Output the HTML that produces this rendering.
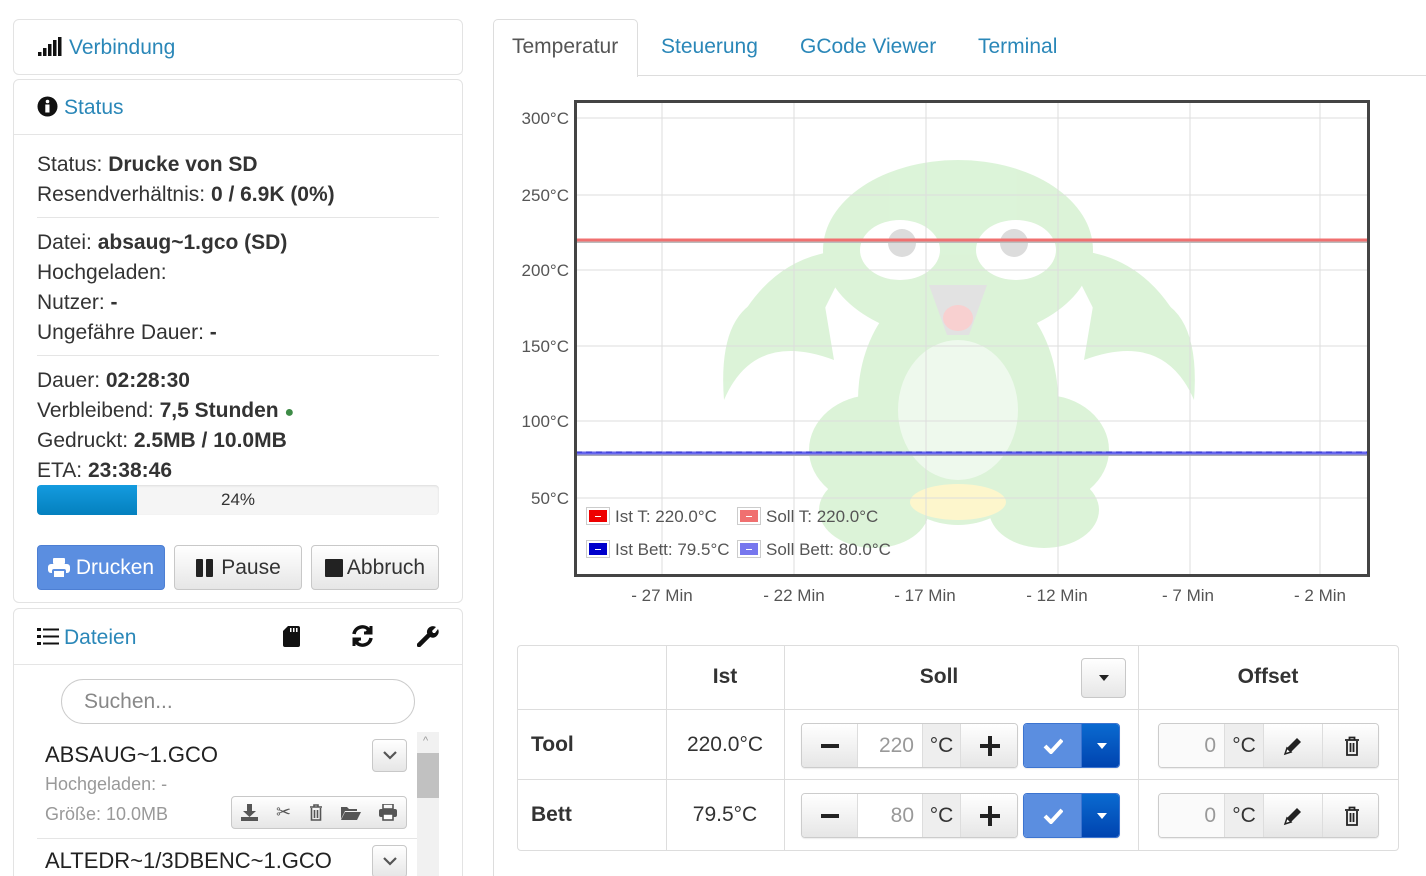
<!DOCTYPE html>
<html style="width:1426px;height:876px;overflow:hidden"><head><meta charset="utf-8"><style>
*{box-sizing:border-box;margin:0;padding:0}
body{width:1426px;height:876px;overflow:hidden;background:#fff;font-family:"Liberation Sans",sans-serif;color:#333;position:relative;font-size:21px}
.a{position:absolute}
.panel{position:absolute;border:1px solid #e3e3e3;border-radius:6px;background:#fff}
.link{color:#2a87b8}
.hr{position:absolute;height:1px;background:#e5e5e5}
.line{position:absolute;left:37px;font-size:21px;line-height:30px;white-space:nowrap}
b{font-weight:bold}
.btn{position:absolute;border:1px solid #c8c8c8;border-radius:4px;background:linear-gradient(#fff,#e6e6e6);display:flex;align-items:center;justify-content:center;color:#333}
.yl{position:absolute;left:505px;width:64px;text-align:right;font-size:17px;color:#555}
.xl{position:absolute;top:586px;font-size:17px;color:#555;width:100px;text-align:center}
.leg{position:absolute;font-size:17px;color:#555;white-space:nowrap}
.sw{display:inline-block;width:24px;height:18px;border:1px solid #ccc;padding:2px;vertical-align:-3px;margin-right:5px}
.sw i{display:block;width:100%;height:100%;position:relative}
.sw i:after{content:"";position:absolute;left:6px;right:6px;top:6px;height:1px;background:#fff}
.grp{position:absolute;height:45px;border:1px solid #ccc;border-radius:4px;overflow:hidden;box-shadow:0 1px 1px rgba(0,0,0,.08)}
.grp>div{position:absolute;top:0;height:43px;display:flex;align-items:center;justify-content:center;border-right:1px solid #ddd}
.g{background:linear-gradient(#fff,#e6e6e6)}
.ad{background:#eee}
.inp{background:#fff;justify-content:flex-end!important;padding-right:8px;color:#999}
</style></head><body>

<div class="panel" style="left:13px;top:19px;width:450px;height:56px"></div>
<svg class="a" style="left:38px;top:37px" width="24" height="20"><rect x="0" y="15" width="3.5" height="4" fill="#111"/><rect x="5" y="11" width="3.5" height="8" fill="#111"/><rect x="10" y="7" width="3.5" height="12" fill="#111"/><rect x="15" y="3" width="3.5" height="16" fill="#111"/><rect x="20" y="0" width="3.5" height="19" fill="#111"/></svg>
<div class="a link" style="left:69px;top:36px">Verbindung</div>

<div class="panel" style="left:13px;top:79px;width:450px;height:524px"></div>
<div class="hr" style="left:14px;top:134px;width:448px"></div>
<svg class="a" style="left:37px;top:96px" width="21" height="21"><circle cx="10.5" cy="10.5" r="10" fill="#111"/><circle cx="10.5" cy="5.5" r="1.8" fill="#fff"/><rect x="8.3" y="8.5" width="4.2" height="8" fill="#fff"/></svg>
<div class="a link" style="left:64px;top:96px">Status</div>
<div class="line" style="top:150px">Status: <b>Drucke von SD</b></div>
<div class="line" style="top:180px">Resendverhältnis: <b>0 / 6.9K (0%)</b></div>
<div class="hr" style="left:37px;top:217px;width:402px"></div>
<div class="line" style="top:228px">Datei: <b>absaug~1.gco (SD)</b></div>
<div class="line" style="top:258px">Hochgeladen:</div>
<div class="line" style="top:288px">Nutzer: <b>-</b></div>
<div class="line" style="top:318px">Ungefähre Dauer: <b>-</b></div>
<div class="hr" style="left:37px;top:355px;width:402px"></div>
<div class="line" style="top:366px">Dauer: <b>02:28:30</b></div>
<div class="line" style="top:396px">Verbleibend: <b>7,5 Stunden</b> <span style="color:#3d8b46;font-size:16px">●</span></div>
<div class="line" style="top:426px">Gedruckt: <b>2.5MB / 10.0MB</b></div>
<div class="line" style="top:456px">ETA: <b>23:38:46</b></div>
<div class="a" style="left:37px;top:485px;width:402px;height:30px;background:#f5f5f5;border-radius:4px;box-shadow:inset 0 1px 2px rgba(0,0,0,.1)"></div>
<div class="a" style="left:37px;top:485px;width:100px;height:30px;background:linear-gradient(#149bdf,#0480be);border-radius:4px 0 0 4px"></div>
<div class="a" style="left:37px;top:490px;width:402px;text-align:center;font-size:17px">24%</div>

<div class="btn" style="left:37px;top:545px;width:128px;height:45px;background:#5b8ee0;border-color:#4d7fd3;color:#fff;font-size:21px">
<svg width="22" height="20" style="margin-right:6px"><rect x="5" y="0" width="12" height="6" rx="1" fill="#fff"/><rect x="0" y="6" width="22" height="9" rx="3" fill="#fff"/><rect x="5" y="12" width="12" height="8" rx="1" fill="#fff" stroke="#5b8ee0" stroke-width="2"/></svg>Drucken</div>
<div class="btn" style="left:174px;top:545px;width:128px;height:45px;font-size:21px"><svg width="20" height="20" style="margin-right:6px"><rect x="1" y="1" width="7" height="18" rx="1" fill="#222"/><rect x="11" y="1" width="7" height="18" rx="1" fill="#222"/></svg>Pause</div>
<div class="btn" style="left:311px;top:545px;width:128px;height:45px;font-size:21px"><svg width="18" height="18" style="margin-right:4px"><rect x="0" y="0" width="18" height="18" rx="1" fill="#222"/></svg>Abbruch</div>

<div class="panel" style="left:13px;top:608px;width:450px;height:290px"></div>
<div class="hr" style="left:14px;top:664px;width:448px"></div>
<svg class="a" style="left:37px;top:628px" width="22" height="17"><rect x="0" y="0" width="4" height="3" fill="#111"/><rect x="6" y="0.5" width="16" height="2" fill="#111"/><rect x="0" y="7" width="4" height="3" fill="#111"/><rect x="6" y="7.5" width="16" height="2" fill="#111"/><rect x="0" y="14" width="4" height="3" fill="#111"/><rect x="6" y="14.5" width="16" height="2" fill="#111"/></svg>
<div class="a link" style="left:64px;top:626px">Dateien</div>
<svg class="a" style="left:283px;top:626px" width="17" height="21"><path d="M5 0H15Q17 0 17 2V19Q17 21 15 21H2Q0 21 0 19V5Z" fill="#111"/><rect x="7" y="2" width="1.5" height="4" fill="#fff"/><rect x="10" y="2" width="1.5" height="4" fill="#fff"/><rect x="13" y="2" width="1.5" height="4" fill="#fff"/></svg>
<svg class="a" style="left:351px;top:625px" width="23" height="22" fill="none" stroke="#111" stroke-width="3.5"><path d="M3 9A8.5 8.5 0 0 1 18 5"/><path d="M20 13A8.5 8.5 0 0 1 5 17"/><path d="M20 1V8H13" stroke-width="3" fill="#111"/><path d="M3 21V14H10" stroke-width="3" fill="#111"/></svg>
<svg class="a" style="left:417px;top:625px" width="22" height="22"><path d="M2 20L12 10" stroke="#111" stroke-width="4.5" stroke-linecap="round"/><path d="M10 8A6 6 0 0 1 19 2L15 6L16 8L18 8L21 4A6 6 0 0 1 13 12Z" fill="#111"/></svg>
<div class="a" style="left:61px;top:679px;width:354px;height:45px;border:1px solid #ccc;border-radius:23px;padding-left:22px;line-height:43px;color:#888;font-size:21px">Suchen...</div>
<div class="a" style="left:417px;top:732px;width:22px;height:144px;background:#f1f1f1"></div>
<div class="a" style="left:417px;top:753px;width:22px;height:45px;background:#c1c1c1"></div>
<div class="a" style="left:423px;top:735px;font-size:11px;color:#999">^</div>
<div class="a" style="left:45px;top:742px;font-size:22px;color:#222">ABSAUG~1.GCO</div>
<div class="btn" style="left:372px;top:739px;width:35px;height:33px"><svg width="14" height="9" fill="none" stroke="#555" stroke-width="2.2"><path d="M1 1L7 7L13 1"/></svg></div>
<div class="a" style="left:45px;top:774px;font-size:18px;color:#999">Hochgeladen: -</div>
<div class="a" style="left:45px;top:804px;font-size:18px;color:#999">Größe: 10.0MB</div>
<div class="btn" style="left:231px;top:796px;width:176px;height:33px;justify-content:space-around;color:#555;font-size:15px">
<svg width="17" height="17"><path d="M6 0H11V7H15L8.5 13L2 7H6Z" fill="#555"/><rect x="0" y="13" width="17" height="4" fill="#555"/></svg>
<span style="font-size:18px">✂</span>
<svg width="14" height="17" fill="none" stroke="#555" stroke-width="1.6"><path d="M1 3H13M5 3V1H9V3M2.5 4V16H11.5V4M5.5 6V14M8.5 6V14"/></svg>
<svg width="20" height="15"><path d="M0 2H6L8 4H16V6H4L0 14Z" fill="#555"/><path d="M4 7H20L16 15H0Z" fill="#555"/></svg>
<svg width="18" height="17"><rect x="4" y="0" width="10" height="5" fill="none" stroke="#555" stroke-width="1.6"/><rect x="0" y="5" width="18" height="8" rx="2" fill="#555"/><rect x="4" y="10" width="10" height="6" fill="#fff" stroke="#555" stroke-width="1.6"/></svg>
</div>
<div class="hr" style="left:37px;top:838px;width:380px"></div>
<div class="a" style="left:45px;top:848px;font-size:22px;color:#222">ALTEDR~1/3DBENC~1.GCO</div>
<div class="btn" style="left:372px;top:845px;width:35px;height:33px"><svg width="14" height="9" fill="none" stroke="#555" stroke-width="2.2"><path d="M1 1L7 7L13 1"/></svg></div>

<div class="a" style="left:493px;top:75px;width:940px;height:810px;border:1px solid #ddd"></div>
<div class="a" style="left:493px;top:19px;width:145px;height:58px;border:1px solid #ddd;border-bottom:none;border-radius:5px 5px 0 0;background:#fff"></div>
<div class="a" style="left:512px;top:35px;color:#555">Temperatur</div>
<div class="a link" style="left:661px;top:35px">Steuerung</div>
<div class="a link" style="left:800px;top:35px">GCode Viewer</div>
<div class="a link" style="left:978px;top:35px">Terminal</div>

<svg class="a" style="left:574px;top:100px" width="796" height="477">
<g fill="#d6f2d2" opacity="0.85">
<ellipse cx="384" cy="150" rx="135" ry="90"/>
<ellipse cx="384" cy="300" rx="100" ry="125"/>
<path d="M280 150Q200 150 160 230Q180 180 250 210Z"/>
<path d="M490 150Q570 150 610 230Q590 180 520 210Z"/>
<path d="M250 200Q140 170 150 300Q180 230 260 260Z"/>
<path d="M520 200Q630 170 620 300Q590 230 510 260Z"/>
<ellipse cx="300" cy="350" rx="65" ry="55"/>
<ellipse cx="470" cy="350" rx="65" ry="55"/>
<ellipse cx="300" cy="410" rx="55" ry="38"/>
<ellipse cx="470" cy="410" rx="55" ry="38"/>
</g>
<ellipse cx="384" cy="310" rx="60" ry="70" fill="#eef9ed"/>
<ellipse cx="326" cy="150" rx="40" ry="30" fill="#fff"/>
<ellipse cx="442" cy="150" rx="40" ry="30" fill="#fff"/>
<circle cx="328" cy="143" r="14" fill="#dcdcdc"/>
<circle cx="440" cy="143" r="14" fill="#dcdcdc"/>
<path d="M355 185H413L395 235H373Z" fill="#e2e2e2"/>
<ellipse cx="384" cy="218" rx="15" ry="13" fill="#f8d0d0"/>
<ellipse cx="384" cy="402" rx="48" ry="18" fill="#fdf6cc"/>
<g stroke="#ddd" stroke-width="1">
<path d="M88 0V477M220 0V477M352 0V477M484 0V477M616 0V477M746 0V477"/>
<path d="M0 18H796M0 95H796M0 170H796M0 246H796M0 321H796M0 398H796"/>
</g>
<path d="M2 142H794" stroke="#bbb" stroke-width="2"/>
<path d="M2 140H794" stroke="#f07070" stroke-width="3"/>
<path d="M2 355H794" stroke="#aab" stroke-width="2"/>
<path d="M2 353H794" stroke="#6666ee" stroke-width="3"/>
<path d="M2 352H794" stroke="#2222cc" stroke-width="1" stroke-dasharray="6 4"/>
<rect x="1.5" y="1.5" width="793" height="474" fill="none" stroke="#444" stroke-width="3"/>
</svg>
<div class="yl" style="top:109px">300°C</div>
<div class="yl" style="top:186px">250°C</div>
<div class="yl" style="top:261px">200°C</div>
<div class="yl" style="top:337px">150°C</div>
<div class="yl" style="top:412px">100°C</div>
<div class="yl" style="top:489px">50°C</div>
<div class="xl" style="left:612px">- 27 Min</div>
<div class="xl" style="left:744px">- 22 Min</div>
<div class="xl" style="left:875px">- 17 Min</div>
<div class="xl" style="left:1007px">- 12 Min</div>
<div class="xl" style="left:1138px">- 7 Min</div>
<div class="xl" style="left:1270px">- 2 Min</div>
<div class="leg" style="left:586px;top:507px"><span class="sw"><i style="background:#e00"></i></span>Ist T: 220.0°C</div>
<div class="leg" style="left:737px;top:507px"><span class="sw"><i style="background:#f07070"></i></span>Soll T: 220.0°C</div>
<div class="leg" style="left:586px;top:540px"><span class="sw"><i style="background:#00c"></i></span>Ist Bett: 79.5°C</div>
<div class="leg" style="left:737px;top:540px"><span class="sw"><i style="background:#7777ee"></i></span>Soll Bett: 80.0°C</div>

<div class="a" style="left:517px;top:645px;width:882px;height:206px;border:1px solid #ddd;border-radius:4px"></div>
<div class="a" style="left:666px;top:645px;width:1px;height:206px;background:#ddd"></div>
<div class="a" style="left:784px;top:645px;width:1px;height:206px;background:#ddd"></div>
<div class="a" style="left:1138px;top:645px;width:1px;height:206px;background:#ddd"></div>
<div class="a" style="left:518px;top:709px;width:880px;height:1px;background:#ddd"></div>
<div class="a" style="left:518px;top:779px;width:880px;height:1px;background:#ddd"></div>
<div class="a" style="left:666px;top:665px;width:118px;text-align:center;font-weight:bold">Ist</div>
<div class="a" style="left:784px;top:665px;width:310px;text-align:center;font-weight:bold">Soll</div>
<div class="a" style="left:1138px;top:665px;width:260px;text-align:center;font-weight:bold">Offset</div>
<div class="btn" style="left:1081px;top:658px;width:45px;height:40px"><svg width="10" height="6"><path d="M0 0H10L5 6Z" fill="#222"/></svg></div>
<div class="a" style="left:531px;top:733px;font-weight:bold">Tool</div>
<div class="a" style="left:531px;top:803px;font-weight:bold">Bett</div>
<div class="a" style="left:666px;top:733px;width:118px;text-align:center">220.0°C</div>
<div class="a" style="left:666px;top:803px;width:118px;text-align:center">79.5°C</div>

<div class="grp" style="left:801px;top:723px;width:217px">
<div class="g" style="left:0;width:56px"><svg width="18" height="4"><rect width="18" height="4" fill="#222"/></svg></div>
<div class="inp" style="left:56px;width:65px">220</div>
<div class="ad" style="left:121px;width:38px">°C</div>
<div class="g" style="left:159px;width:57px;border:none"><svg width="20" height="20"><rect x="8" y="0" width="4" height="20" fill="#222"/><rect x="0" y="8" width="20" height="4" fill="#222"/></svg></div>
</div>
<div class="grp" style="left:1023px;top:723px;width:97px;border-color:#3c74d0">
<div style="left:0;width:58px;background:#5b8ee0;border-color:#3c74d0"><svg width="20" height="16" fill="none" stroke="#fff" stroke-width="4"><path d="M2 8L8 14L19 2"/></svg></div>
<div style="left:58px;width:39px;background:linear-gradient(#0a6ad0,#0044b0);border:none"><svg width="10" height="6"><path d="M0 0H10L5 6Z" fill="#fff"/></svg></div>
</div>
<div class="grp" style="left:1158px;top:723px;width:221px">
<div class="inp" style="left:0;width:66px;background:#fafafa">0</div>
<div class="ad" style="left:66px;width:39px">°C</div>
<div class="g" style="left:105px;width:59px"><svg width="20" height="20"><path d="M2 18L4 12L14 2L18 6L8 16Z" fill="#222"/><path d="M2 18L4 12L8 16Z" fill="#fff" stroke="#222" stroke-width="1.5"/></svg></div>
<div class="g" style="left:164px;width:57px;border:none"><svg width="16" height="20" fill="none" stroke="#222" stroke-width="1.8"><path d="M1 4H15M5.5 4V1.5H10.5V4M3 5V19H13V5M6.5 7V16M9.5 7V16"/></svg></div>
</div>

<div class="grp" style="left:801px;top:793px;width:217px">
<div class="g" style="left:0;width:56px"><svg width="18" height="4"><rect width="18" height="4" fill="#222"/></svg></div>
<div class="inp" style="left:56px;width:65px">80</div>
<div class="ad" style="left:121px;width:38px">°C</div>
<div class="g" style="left:159px;width:57px;border:none"><svg width="20" height="20"><rect x="8" y="0" width="4" height="20" fill="#222"/><rect x="0" y="8" width="20" height="4" fill="#222"/></svg></div>
</div>
<div class="grp" style="left:1023px;top:793px;width:97px;border-color:#3c74d0">
<div style="left:0;width:58px;background:#5b8ee0;border-color:#3c74d0"><svg width="20" height="16" fill="none" stroke="#fff" stroke-width="4"><path d="M2 8L8 14L19 2"/></svg></div>
<div style="left:58px;width:39px;background:linear-gradient(#0a6ad0,#0044b0);border:none"><svg width="10" height="6"><path d="M0 0H10L5 6Z" fill="#fff"/></svg></div>
</div>
<div class="grp" style="left:1158px;top:793px;width:221px">
<div class="inp" style="left:0;width:66px;background:#fafafa">0</div>
<div class="ad" style="left:66px;width:39px">°C</div>
<div class="g" style="left:105px;width:59px"><svg width="20" height="20"><path d="M2 18L4 12L14 2L18 6L8 16Z" fill="#222"/><path d="M2 18L4 12L8 16Z" fill="#fff" stroke="#222" stroke-width="1.5"/></svg></div>
<div class="g" style="left:164px;width:57px;border:none"><svg width="16" height="20" fill="none" stroke="#222" stroke-width="1.8"><path d="M1 4H15M5.5 4V1.5H10.5V4M3 5V19H13V5M6.5 7V16M9.5 7V16"/></svg></div>
</div>
</body></html>
